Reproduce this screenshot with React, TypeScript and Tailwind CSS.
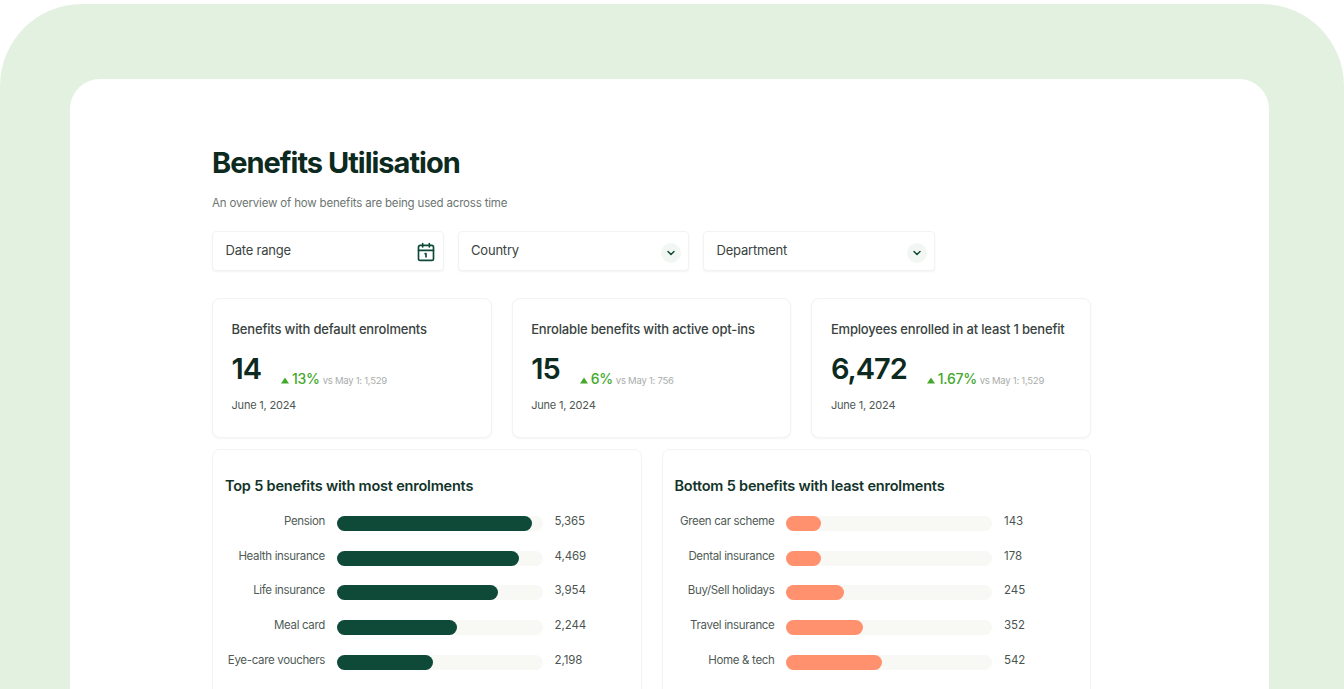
import { Calendar1, ChevronDown } from "lucide-react";

const stats = [
  { title: "Benefits with default enrolments", value: "14", change: "13%", note: "vs May 1: 1,529" },
  { title: "Enrolable benefits with active opt-ins", value: "15", change: "6%", note: "vs May 1: 756" },
  { title: "Employees enrolled in at least 1 benefit", value: "6,472", change: "1.67%", note: "vs May 1: 1,529" },
];

const top = [
  { label: "Pension", value: "5,365", width: 195 },
  { label: "Health insurance", value: "4,469", width: 182 },
  { label: "Life insurance", value: "3,954", width: 161 },
  { label: "Meal card", value: "2,244", width: 120 },
  { label: "Eye-care vouchers", value: "2,198", width: 96 },
];

const bottom = [
  { label: "Green car scheme", value: "143", width: 35 },
  { label: "Dental insurance", value: "178", width: 35 },
  { label: "Buy/Sell holidays", value: "245", width: 58 },
  { label: "Travel insurance", value: "352", width: 77 },
  { label: "Home & tech", value: "542", width: 96 },
];

function Select({ label }: { label: string }) {
  return (
    <div className="flex h-[40px] w-[231.5px] items-center justify-between rounded-[4px] border border-[#f2f4f1] bg-white pl-[12.5px] pr-[7px] shadow-[0_1px_2px_rgba(30,50,40,0.06)]">
      <span className="text-[13px] tracking-[-0.2px] text-[#3a4440]">{label}</span>
      <span className="mt-[3px] flex h-[20px] w-[20px] items-center justify-center rounded-full bg-[#f3f7f4]">
        <ChevronDown size={12} strokeWidth={3} className="text-[#0f4a38]" />
      </span>
    </div>
  );
}

function StatCard({ title, value, change, note }: { title: string; value: string; change: string; note: string }) {
  return (
    <div className="h-[140px] w-[279.7px] rounded-[8px] border border-[#f2f4f1] bg-white pl-[18.5px] pt-[21px] shadow-[0_1px_2px_rgba(30,50,40,0.05)]">
      <p className="text-[13px] leading-[18px] font-medium tracking-[-0.18px] whitespace-nowrap text-[#38423e]">{title}</p>
      <div className="mt-[13px] flex h-[36px] items-end">
        <span className="text-[29px] leading-[36px] font-semibold tracking-[-1px] text-[#0c2a20]">{value}</span>
        <span className="mb-[-1px] ml-[20px] flex items-center text-[14px] leading-[18px] font-medium tracking-[-0.3px] text-[#43a82c]">
          <svg width="8" height="7" viewBox="0 0 8 7" className="mt-[2px] mr-[3px]">
            <path d="M4 0.5 L8 6.5 L0 6.5 Z" fill="#43a82c" />
          </svg>
          {change}
        </span>
        <span className="mb-[-1px] ml-[3px] text-[9.5px] leading-[14px] tracking-[-0.25px] text-[#a9adab]">{note}</span>
      </div>
      <p className="mt-[10px] text-[11px] leading-[16px] tracking-[-0.2px] text-[#4e5753]">June 1, 2024</p>
    </div>
  );
}

function BarCard({ title, rows, color }: { title: string; rows: typeof top; color: string }) {
  return (
    <div className="h-[260px] w-[429.5px] rounded-t-[8px] border border-[#f2f4f1] bg-white pl-[12px] pt-[26px]">
      <h2 className="text-[14.5px] leading-[20px] font-semibold tracking-[-0.2px] whitespace-nowrap text-[#12342a]">{title}</h2>
      <div className="mt-[20px] flex flex-col gap-[19.7px]">
        {rows.map((row) => (
          <div key={row.label} className="flex h-[15px] items-center">
            <span className="mb-[4px] w-[100px] text-right text-[11.5px] tracking-[-0.33px] whitespace-nowrap text-[#505b56]">{row.label}</span>
            <div className="ml-[11.6px] h-[15px] w-[206px] rounded-full bg-[#f8f9f5]">
              <div className={`h-full rounded-full ${color}`} style={{ width: row.width }} />
            </div>
            <span className="mb-[4px] ml-[12px] text-[11.5px] tracking-[-0.1px] text-[#4a5450]">{row.value}</span>
          </div>
        ))}
      </div>
    </div>
  );
}

export default function App() {
  return (
    <div className="h-[689px] overflow-hidden bg-white pt-[4px] font-['Inter',sans-serif]">
      <div className="h-full rounded-t-[82px] bg-[#e3f2e0] pl-[70px] pr-[75px] pt-[75px]">
        <div className="h-full overflow-hidden rounded-t-[30px] bg-white pl-[142px] pt-[66px]">
          <h1 className="text-[29px] leading-[36px] font-bold tracking-[-1px] text-[#0c2a20]">Benefits Utilisation</h1>
          <p className="mt-[14px] text-[11.5px] leading-[16px] tracking-[-0.18px] text-[#6d7572]">An overview of how benefits are being used across time</p>

          <div className="mt-[20px] flex gap-[14px]">
            <div className="flex h-[40px] w-[231.5px] items-center justify-between rounded-[4px] border border-[#f2f4f1] bg-white pl-[12.5px] pr-[7px] shadow-[0_1px_2px_rgba(30,50,40,0.06)]">
              <span className="text-[13px] tracking-[-0.2px] text-[#3a4440]">Date range</span>
              <Calendar1 size={20} strokeWidth={2} className="mt-[2px] text-[#0f4a38]" />
            </div>
            <Select label="Country" />
            <Select label="Department" />
          </div>

          <div className="mt-[27px] flex gap-[20px]">
            {stats.map((s) => (
              <StatCard key={s.title} {...s} />
            ))}
          </div>

          <div className="mt-[11px] flex gap-[20px]">
            <BarCard title="Top 5 benefits with most enrolments" rows={top} color="bg-[#0f4a38]" />
            <BarCard title="Bottom 5 benefits with least enrolments" rows={bottom} color="bg-[#ff916f]" />
          </div>
        </div>
      </div>
    </div>
  );
}
